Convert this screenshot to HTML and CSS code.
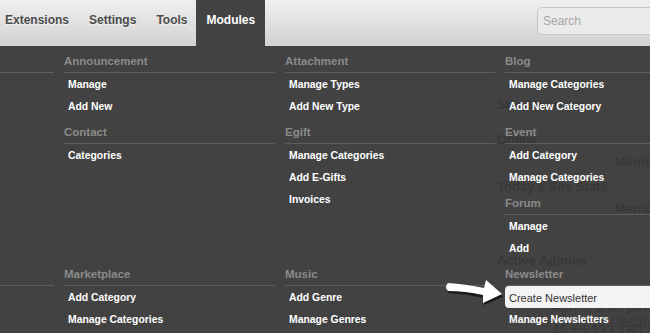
FILE: index.html
```html
<!DOCTYPE html>
<html lang="en">
<head>
    <meta charset="UTF-8">
    <title>Admin - Modules</title>
    <link rel="stylesheet" href="styles.css">
</head>
<body>
    <div class="topbar">
        <ul class="nav">
            <li><a href="#">Extensions</a></li>
            <li><a href="#">Settings</a></li>
            <li><a href="#">Tools</a></li>
            <li class="active"><a href="#">Modules</a></li>
        </ul>
        <div class="search">
            <input type="text" placeholder="Search">
        </div>
    </div>

    <!-- page content under the dropdown -->
    <div class="page">
        <div class="main">
            <div class="notes"><span class="grip"></span></div>
        </div>
        <div class="stats">
            <h3 class="first">Site Statistics</h3>
            <h3 class="online">Online</h3>
            <div class="stat-row">Members</div>
            <h3 class="today">Today's Site Stats</h3>
            <div class="stat-row">Members</div>
            <h3 class="admins">Active Admins</h3>
            <div class="admin-line april">April 5 3:05 pm</div>
            <div class="admin-line dash">Dashboard</div>
            <div class="admin-line ip">46.55.133.180</div>
        </div>
    </div>

    <div class="dropdown">
        <div class="menu-grid">
            <div class="group">
                <div class="section">
                    <div class="section-title">Ads</div>
                    <a class="item" href="#">Manage Ads</a>
                    <a class="item" href="#">Create New Ad</a>
                </div>
            </div>
            <div class="group">
                <div class="section">
                    <div class="section-title">Announcement</div>
                    <a class="item" href="#">Manage</a>
                    <a class="item" href="#">Add New</a>
                </div>
                <div class="section">
                    <div class="section-title">Contact</div>
                    <a class="item" href="#">Categories</a>
                </div>
            </div>
            <div class="group">
                <div class="section">
                    <div class="section-title">Attachment</div>
                    <a class="item" href="#">Manage Types</a>
                    <a class="item" href="#">Add New Type</a>
                </div>
                <div class="section">
                    <div class="section-title">Egift</div>
                    <a class="item" href="#">Manage Categories</a>
                    <a class="item" href="#">Add E-Gifts</a>
                    <a class="item" href="#">Invoices</a>
                </div>
            </div>
            <div class="group">
                <div class="section">
                    <div class="section-title">Blog</div>
                    <a class="item" href="#">Manage Categories</a>
                    <a class="item" href="#">Add New Category</a>
                </div>
                <div class="section">
                    <div class="section-title">Event</div>
                    <a class="item" href="#">Add Category</a>
                    <a class="item" href="#">Manage Categories</a>
                </div>
                <div class="section">
                    <div class="section-title">Forum</div>
                    <a class="item" href="#">Manage</a>
                    <a class="item" href="#">Add</a>
                </div>
            </div>

            <div class="group">
                <div class="section">
                    <div class="section-title">Mail</div>
                    <a class="item" href="#">Folders</a>
                    <a class="item" href="#">Messages</a>
                </div>
            </div>
            <div class="group">
                <div class="section">
                    <div class="section-title">Marketplace</div>
                    <a class="item" href="#">Add Category</a>
                    <a class="item" href="#">Manage Categories</a>
                </div>
            </div>
            <div class="group">
                <div class="section">
                    <div class="section-title">Music</div>
                    <a class="item" href="#">Add Genre</a>
                    <a class="item" href="#">Manage Genres</a>
                </div>
            </div>
            <div class="group">
                <div class="section">
                    <div class="section-title">Newsletter</div>
                    <a class="item hover" href="#">Create Newsletter</a>
                    <a class="item" href="#">Manage Newsletters</a>
                </div>
            </div>
        </div>
    </div>

    <svg class="pointer" width="72" height="42" viewBox="0 0 72 42">
        <path class="pointer-shadow" d="M9 14 Q26 15 45 19 L47 10 L63 25 L44 33 L44 26 Q26 22 9 21 Q5 17.5 9 14 Z"/>
        <path class="pointer-fill" d="M8 11 Q25 12 44 16 L46 8 L62 22 L43 31 L43 23 Q25 19 8 19 Q4 15 8 11 Z"/>
    </svg>
</body>
</html>
```

FILE: styles.css
```css
body {
    margin: 0;
    width: 650px;
    height: 333px;
    overflow: hidden;
    position: relative;
    font-family: 'Liberation Sans', Arial, sans-serif;
    background-color: #fff;
}
.topbar {
    height: 46px;
    display: flex;
    background: linear-gradient(#efefef, #d2d2d2);
}
.nav {
    list-style: none;
    margin: 0 0 0 -5px;
    padding: 0;
    display: flex;
}
.nav a {
    display: block;
    height: 33px;
    padding: 13px 10px 0;
    font-size: 12px;
    font-weight: bold;
    line-height: 14px;
    color: #4b4b4b;
    text-decoration: none;
    text-shadow: 0 1px 0 rgba(255, 255, 255, 0.6);
}
.nav .active {
    margin-left: -1px;
}
.nav .active a {
    background-color: #434343;
    color: #fff;
    text-shadow: none;
}
.search {
    margin-left: auto;
    padding-top: 7px;
    width: 113px;
}
.search input {
    box-sizing: border-box;
    width: 140px;
    height: 28px;
    padding: 0 5px;
    border: 1px solid #c6c6c6;
    border-radius: 5px;
    background-color: #ebebeb;
    font-family: 'Liberation Sans', Arial, sans-serif;
    font-size: 12px;
    color: #555;
}
.search input::placeholder {
    color: #a8a8a8;
}

/* content behind the menu */
.page {
    display: flex;
}
.main {
    flex: none;
    width: 497px;
}
.notes {
    position: relative;
    box-sizing: border-box;
    margin: 87px 0 0 300px;
    width: 181px;
    height: 130px;
    border: 1px solid #ccc;
}
.grip {
    position: absolute;
    right: 2px;
    bottom: 2px;
    width: 7px;
    height: 7px;
    background: linear-gradient(135deg, transparent 45%, #bbb 45%, #bbb 55%, transparent 55%, transparent 75%, #bbb 75%, #bbb 85%, transparent 85%);
}
.stats {
    flex: none;
    width: 153px;
    color: #333;
}
.stats h3 {
    margin: 0;
    font-size: 13px;
    font-weight: bold;
    line-height: 16px;
    white-space: nowrap;
}
.stats h3.first {
    margin-top: 51px;
}
.stats h3.online {
    margin-top: 19px;
}
.stats h3.today {
    margin-top: 9px;
}
.stat-row {
    margin: 6px 0 0 118px;
    font-size: 13px;
    font-weight: bold;
    line-height: 16px;
}
.stats h3.admins {
    margin-top: 36px;
}
.admin-line {
    margin-left: 55px;
    font-size: 14px;
    line-height: 14px;
    white-space: nowrap;
}
.admin-line.april {
    margin-top: 31px;
}
.admin-line.dash {
    margin-left: 113px;
    margin-top: 1px;
}
.admin-line.ip {
    margin-top: -6px;
}

/* modules dropdown */
.dropdown {
    position: absolute;
    top: 46px;
    left: 0;
    right: 0;
    bottom: 0;
    background-color: rgba(56, 56, 56, 0.95);
}
.menu-grid {
    display: grid;
    grid-template-columns: 211px 211px 210px 211px;
    column-gap: 10px;
    margin-left: -157px;
}
.section-title {
    padding: 9px 0 4px;
    font-size: 11.5px;
    font-weight: bold;
    line-height: 13px;
    color: #8b8b8b;
    border-bottom: 1px solid #5e5e5e;
}
.item {
    display: block;
    height: 22px;
    padding-left: 4px;
    font-size: 10.4px;
    font-weight: bold;
    line-height: 24px;
    color: #fff;
    text-decoration: none;
}
.item.hover {
    background-color: rgba(255, 255, 255, 0.94);
    color: #333;
    font-size: 11px;
    font-weight: normal;
    border-radius: 4px 0 0 4px;
    margin-right: -10px;
}

.pointer {
    position: absolute;
    left: 440px;
    top: 272px;
}
.pointer-shadow {
    fill: rgba(0, 0, 0, 0.6);
}
.pointer-fill {
    fill: #fff;
}
```
